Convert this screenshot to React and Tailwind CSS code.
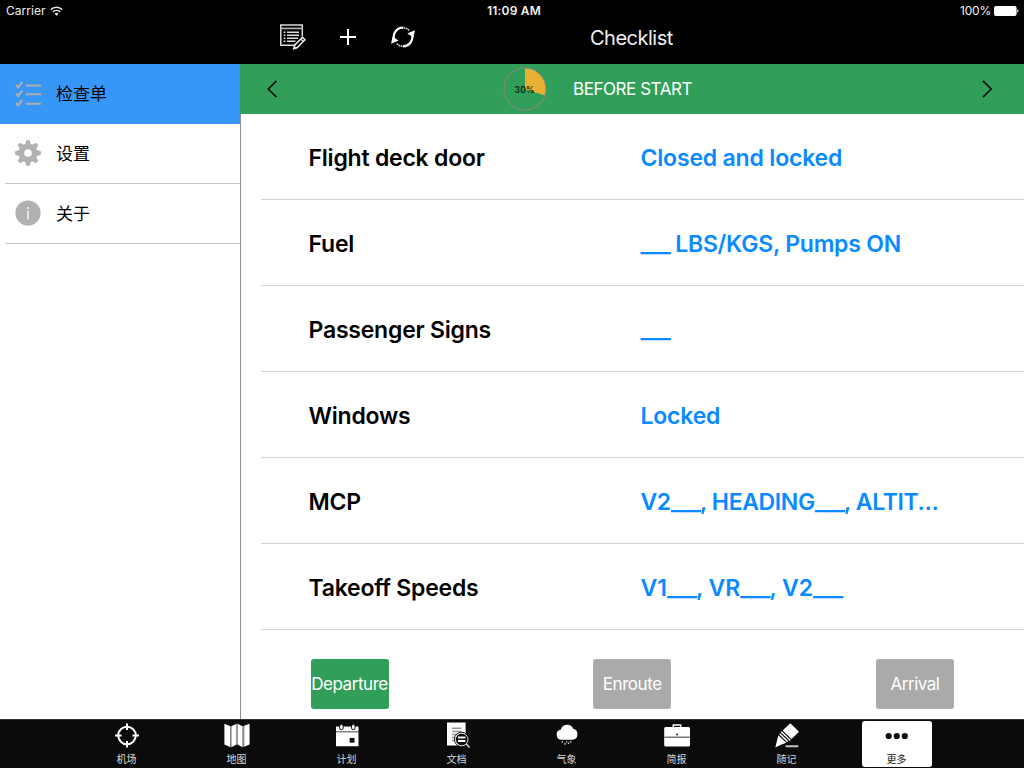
const ROWS = [
  ["Flight deck door", "Closed and locked", "tracking-[-0.18px]"],
  ["Fuel", "___ LBS/KGS, Pumps ON", "tracking-[-0.22px]"],
  ["Passenger Signs", "___", "tracking-[-0.2px]"],
  ["Windows", "Locked", "tracking-[-0.2px]"],
  ["MCP", "V2___, HEADING___, ALTIT...", "tracking-[-0.36px]"],
  ["Takeoff Speeds", "V1___, VR___, V2___", "tracking-[-0.02px]"],
];

function WifiIcon() {
  return (
    <svg className="h-[10px] w-[13px]" viewBox="0 0 13 10" fill="none" stroke="#e8e8e8" strokeWidth="1.6">
      <path d="M0.8 3.6a8.2 8.2 0 0 1 11.4 0" />
      <path d="M2.9 5.9a5.2 5.2 0 0 1 7.2 0" />
      <path d="M6.5 9.8 4.5 7.8a2.8 2.8 0 0 1 4 0z" fill="#e8e8e8" stroke="none" />
    </svg>
  );
}

function BatteryIcon() {
  return (
    <svg className="h-[10px] w-[25px]" viewBox="0 0 25 10">
      <rect x="0" y="0" width="22.6" height="10" rx="2" fill="#fff" />
      <path d="M23.3 3.2c1.6.6 1.6 3 0 3.600z" fill="#fff" />
    </svg>
  );
}

function NotesIcon() {
  return (
    <svg className="h-[28px] w-[28px]" viewBox="0 0 28 28" fill="none" stroke="#dcdcdc" strokeWidth="1.5">
      <path d="M16.500 22.200H2.800V2H24.300V13.500" />
      <path d="M2.800 5.400H24.300" stroke="#b0b0b0" strokeWidth="1.700" />
      <path d="M5.700 9.200h1.800M9 9.200h12M5.700 12.200h1.800M9 12.200h12M5.700 15.200h1.800M9 15.200h11M5.700 18.200h1.800M9 18.200h8.500" strokeWidth="1.400" />
      <path d="M15.800 25.700 16.800 22 24.500 14.300 27 16.800 19.300 24.500z" fill="#000" stroke="#f0f0f0" strokeWidth="1.500" />
      <path d="M15.200 26.400 16.300 22.900 18.800 25.200z" fill="#f0f0f0" stroke="none" />
      <path d="M22.800 16l2.500 2.500" />
    </svg>
  );
}

function PlusIcon() {
  return (
    <svg className="h-[18px] w-[18px]" viewBox="0 0 18 18" stroke="#fff" strokeWidth="2">
      <path d="M9 1v16M1 9h16" />
    </svg>
  );
}

function SyncIcon() {
  return (
    <svg className="h-[24px] w-[26px]" viewBox="0 0 26 24" fill="none" stroke="#fff" strokeWidth="2.200">
      <path d="M5 16.700A9.300 9.300 0 0 1 13 2.700" />
      <path d="M21 7.300A9.300 9.300 0 0 1 13 21.300" />
      <path d="M13.500 2.700q3 .2 5.800 2.600M12.500 21.300q-3-.2-5.800-2.600" strokeWidth="1.800" strokeDasharray="1.800 0.700" stroke="#cfcfcf" />
      <path d="M17.300 8.500 24.900 5.300 23.500 12.200z" fill="#fff" stroke="none" />
      <path d="M8.700 15.500 1.100 18.700 2.500 11.800z" fill="#fff" stroke="none" />
    </svg>
  );
}

function ListIcon() {
  return (
    <svg className="h-[26px] w-[26px]" viewBox="0 0 26 26" fill="none" stroke="#adadad" strokeWidth="2">
      <path d="M10.800 4.500H26M10.800 13.200H26M10.800 22.700H26" />
      <path d="M1 4 3.200 6.500 7.200 0.800M1 12.500 3.200 15 7.200 9.300M1 22 3.200 24.500 7.200 18.800" strokeWidth="2.200" />
    </svg>
  );
}

function GearIcon() {
  return (
    <svg className="-mt-px h-[26px] w-[26px]" viewBox="-13 -13 26 26">
      <g fill="#b1b1b1">
        {[0, 45, 90, 135, 180, 225, 270, 315].map((a) => (
          <path key={a} transform={`rotate(${a})`} d="M-2.900-8-1.900-12.300Q-1.800-12.800-1.300-12.800H1.300Q1.800-12.800 1.900-12.300L2.900-8z" />
        ))}
      </g>
      <circle r="6.600" fill="none" stroke="#b1b1b1" strokeWidth="5.600" />
    </svg>
  );
}

function InfoIcon() {
  return (
    <svg className="-mt-px h-[26px] w-[26px]" viewBox="0 0 26 26">
      <circle cx="13" cy="13" r="12.600" fill="#b1b1b1" />
      <circle cx="13" cy="8" r="1" fill="#fff" />
      <path d="M13 10.500V19.500" stroke="#fff" strokeWidth="1.300" />
    </svg>
  );
}

function Chevron({ left }) {
  return (
    <svg className="h-[20px] w-[12px]" viewBox="0 0 12 20" fill="none" stroke="#101010" strokeWidth="1.700">
      <path d={left ? "M10.500 1.800 2.300 10 10.500 18.200" : "M2 1.800 10.200 10 2 18.200"} />
    </svg>
  );
}

function ProgressDial() {
  return (
    <svg className="h-[44px] w-[44px]" viewBox="0 0 44 44">
      <path d="M22 22V1A21 21 0 0 1 41.970 28.490z" fill="#e9b133" />
      <circle cx="22" cy="22" r="21" fill="none" stroke="#7f8a7c" strokeWidth="1.200" />
      <text x="21.700" y="25.500" textAnchor="middle" className="fill-[#0c1a0c] text-[8.5px] font-semibold tracking-[0.2px]">
        30%
      </text>
    </svg>
  );
}

const TABS = [
  [
    "机场",
    <>
      <circle cx="14" cy="14" r="8.800" fill="none" stroke="#fff" strokeWidth="2" />
      <path d="M14 2v6.500M14 19.500V26M2 14h6.500M19.500 14H26" stroke="#fff" strokeWidth="2" />
    </>,
  ],
  [
    "地图",
    <>
      <path d="M1.400 2.200 7.500 4.700V25.700L1.400 23z" fill="#fff" />
      <path d="M8.300 4.700 13.600 2.200V23L8.300 25.700z" fill="#fff" />
      <path d="M14.400 2.200 19.700 4.700V25.700L14.400 23z" fill="#fff" />
      <path d="M19.700 4.700 21.200 4V25L19.700 25.700z" fill="#8d8d8d" />
      <path d="M21.200 4.200 26.600 2.200V23L21.200 25.200z" fill="#fff" />
    </>,
  ],
  [
    "计划",
    <>
      <path d="M3 5h22.500V10H3zM3 10.800h22.500V24.700H3z" fill="#fff" />
      <rect x="6.600" y="2.800" width="3.600" height="5.400" rx="1.800" fill="#fff" stroke="#0b0b0b" strokeWidth="1" />
      <rect x="18.500" y="2.800" width="3.600" height="5.400" rx="1.800" fill="#fff" stroke="#0b0b0b" strokeWidth="1" />
      <rect x="16.700" y="16.400" width="4.800" height="4.800" fill="#111" />
    </>,
  ],
  [
    "文档",
    <>
      <path d="M4 1h18.600V24H4z" fill="#fff" />
      <path d="M9 6.800h9.500M9 10h9.500M9 13h5M9 16h3M9 19h3" stroke="#999" strokeWidth="1.500" />
      <circle cx="18.700" cy="18" r="7.300" fill="none" stroke="#0b0b0b" strokeWidth="1" />
      <circle cx="18.700" cy="18" r="6.300" fill="#0b0b0b" stroke="#ddd" strokeWidth="1" />
      <path d="M15 16h7.400M15 19.500h7.400" stroke="#fff" strokeWidth="1.800" />
      <path d="M23.300 22.500 26.500 26" stroke="#ddd" strokeWidth="1.500" />
    </>,
  ],
  [
    "气象",
    <>
      <path d="M8.500 18.300a5.200 5.200 0 0 1-.600-10.300 6.500 6.500 0 0 1 12.300-.700A5.600 5.600 0 0 1 19.500 18.300z" fill="#fff" />
      <path d="M9.500 19.800l-.5 1.500M14 19.800l-.4 1.200M18 19.800l-.5 1.500M12.300 21.500l-.7 1.800M16 21l-.8 1.500" stroke="#ccc" strokeWidth="1.300" />
    </>,
  ],
  [
    "简报",
    <>
      <path d="M10.300 6V3.600h7.400V6" fill="none" stroke="#fff" strokeWidth="1.500" />
      <rect x="1.200" y="5.600" width="25.800" height="19.400" rx="1.500" fill="#fff" />
      <path d="M1.200 15.700H27" stroke="#777" strokeWidth="1.400" />
      <circle cx="14" cy="13" r="1" fill="#222" />
    </>,
  ],
  [
    "随记",
    <>
      <path d="M17.300 1.800 26 10.200 18.500 17.500 9.600 9z" fill="#fff" />
      <path d="M8.300 10.300 17.300 19" stroke="#fff" strokeWidth="1.500" />
      <path d="M6.700 12.300 14.700 20.300" stroke="#fff" strokeWidth="1.500" />
      <path d="M5.300 13.800 13.300 21.300 8 23.300 2.300 26z" fill="#fff" />
      <path d="M12.500 24.800H25.300" stroke="#c4c4c4" strokeWidth="2" />
    </>,
  ],
  [
    "更多",
    <>
      <circle cx="5.700" cy="14.500" r="3.100" fill="#0b0b0b" />
      <circle cx="13.800" cy="14.500" r="3.100" fill="#0b0b0b" />
      <circle cx="21.800" cy="14.500" r="3.100" fill="#0b0b0b" />
    </>,
  ],
];

function Value({ text, tracking }) {
  return (
    <span className={`whitespace-pre text-[#0a8aff] ${tracking}`}>
      {text.split(/(_+)/).map((part, i) =>
        part.startsWith("_") ? (
          <span key={i} className="tracking-[-1.1px]">{part}</span>
        ) : (
          part
        )
      )}
    </span>
  );
}

export default function App() {
  return (
    <div className="flex h-[768px] w-[1024px] flex-col overflow-hidden bg-white font-['Inter','Noto_Sans_CJK_SC',sans-serif]">
      <header className="flex h-16 flex-col bg-black text-[#f0f0f0]">
        <div className="grid h-[21px] grid-cols-3 items-center text-[12px]">
          <div className="flex items-center gap-[4px] pl-[6px]">
            <span className="tracking-[0.05px]">Carrier</span>
            <WifiIcon />
          </div>
          <div className="pl-1 text-center font-semibold tracking-[0.22px]">11:09 AM</div>
          <div className="flex items-center justify-end gap-[3px] pr-[5px]">
            <span className="tracking-[-0.2px]">100%</span>
            <BatteryIcon />
          </div>
        </div>
        <div className="flex h-[43px] items-center pb-[12px]">
          <div className="flex w-[424px] items-center pl-[278px]">
            <div className="flex w-[61px] items-center"><NotesIcon /></div>
            <div className="flex w-[51px] items-center"><PlusIcon /></div>
            <SyncIcon />
          </div>
          <div className="flex-1 pl-[166px] pt-[2px] text-[20px] tracking-[-0.5px]">Checklist</div>
        </div>
      </header>

      <div className="flex h-[655px]">
        <nav className="w-[241px] shrink-0 border-r border-[#8e8e93] text-[17px] text-black">
          <div className="flex h-[60px] items-center gap-[15px] bg-[#3697f9] pl-[15px]">
            <ListIcon />
            <span className="pt-[2px]">检查单</span>
          </div>
          <div className="ml-[5px] flex h-[60px] items-center gap-[15px] border-b border-[#c8c7cc] pl-[10px]">
            <GearIcon />
            <span className="pt-[2px]">设置</span>
          </div>
          <div className="ml-[5px] flex h-[60px] items-center gap-[15px] border-b border-[#c8c7cc] pl-[10px]">
            <InfoIcon />
            <span className="pt-[2px]">关于</span>
          </div>
        </nav>

        <main className="flex min-w-0 flex-1 flex-col">
          <div className="-ml-px flex h-[50px] items-center bg-[#319f5a] pl-[26px] pr-[31px] text-white">
            <Chevron left />
            <div className="flex flex-1 items-center gap-[26px] pl-[225px]">
              <ProgressDial />
              <span className="pt-[2px] text-[17px] tracking-[-0.45px]">BEFORE START</span>
            </div>
            <Chevron />
          </div>

          <ul className="ml-5">
            {ROWS.map(([item, value, tracking]) => (
              <li key={item} className="flex h-[86px] items-center border-b border-[#d4d4d6] pl-[47.500px] pt-[3px] text-[23px] font-semibold">
                <span className="w-[332px] tracking-[-0.22px] text-black">{item}</span>
                <Value text={value} tracking={tracking} />
              </li>
            ))}
          </ul>

          <div className="flex justify-between pl-[69.500px] pr-[70px] pt-[29px] text-[17px] text-white">
            <button className="flex h-[50px] w-[78px] items-center justify-center rounded-[3px] bg-[#319f5a] pt-[2px] tracking-[-0.45px]">Departure</button>
            <button className="flex h-[50px] w-[78px] items-center justify-center rounded-[3px] bg-[#aaaaaa] pt-[2px] tracking-[-0.45px]">Enroute</button>
            <button className="flex h-[50px] w-[78px] items-center justify-center rounded-[3px] bg-[#aaaaaa] pt-[2px] tracking-[-0.5px]">Arrival</button>
          </div>
        </main>
      </div>

      <footer className="flex h-[49px] gap-[40px] border-t border-[#333] bg-[#0b0b0b] pl-[91.500px] pt-px text-[10px] text-[#d8d8d8]">
        {TABS.map(([label, icon], i) => (
          <div
            key={label}
            className={`flex h-[46px] w-[70px] flex-col items-center rounded-[3px] ${i === 7 ? "bg-white text-[#222]" : ""}`}
          >
            <svg className="h-[28px] w-[28px] translate-y-[0.500px]" viewBox="0 0 28 28">{icon}</svg>
            <span className="mt-[3px] leading-[15px]">{label}</span>
          </div>
        ))}
      </footer>
    </div>
  );
}
